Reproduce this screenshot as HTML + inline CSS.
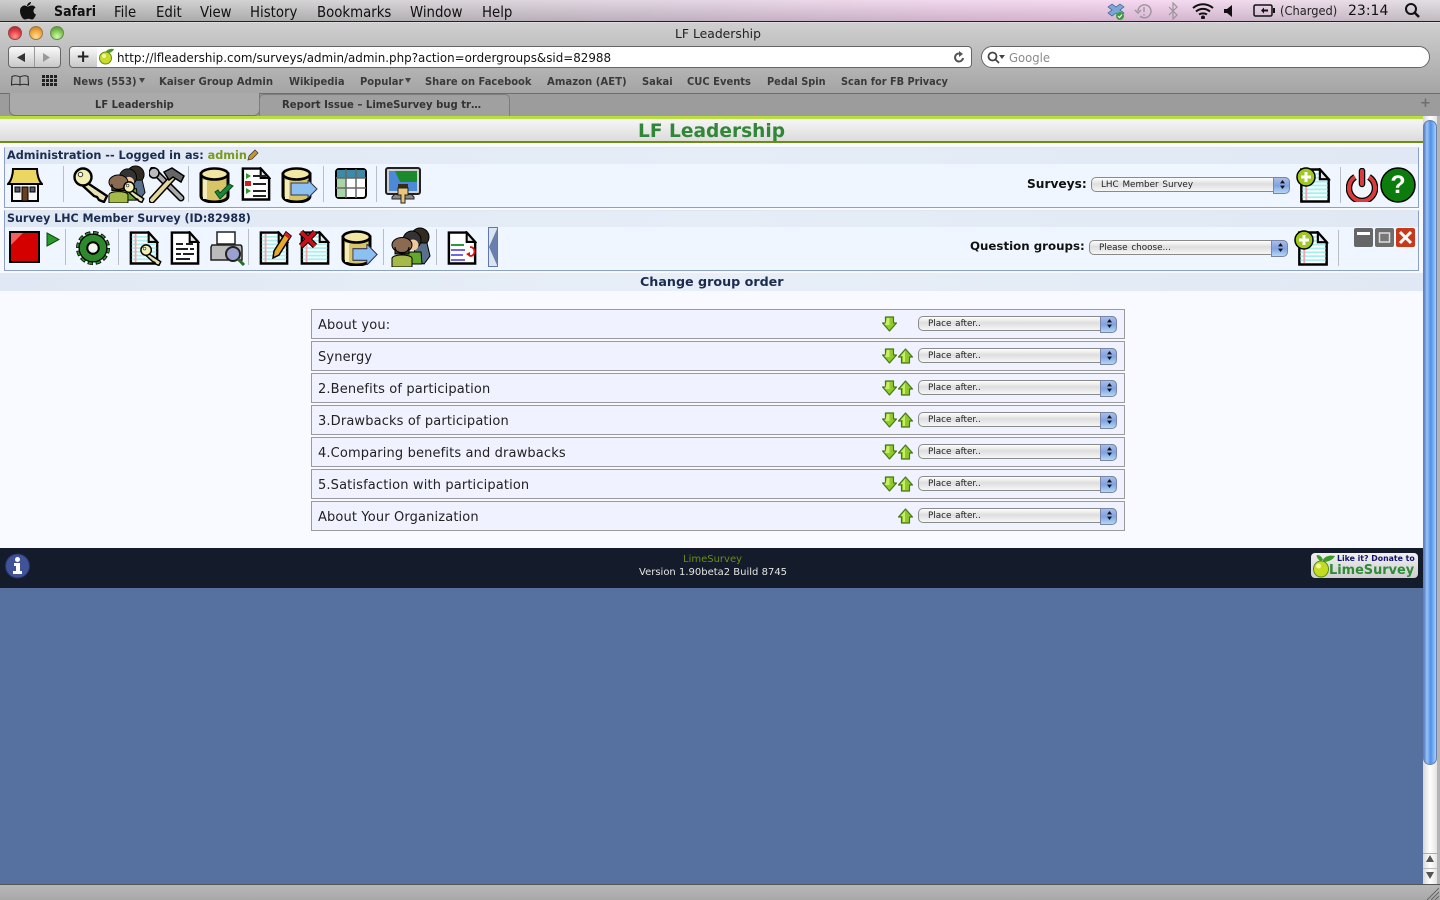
<!DOCTYPE html>
<html lang="en"><head><meta charset="utf-8"><title>LF Leadership</title>
<style>
html,body{margin:0;padding:0;width:1440px;height:900px;overflow:hidden;background:#5670a0}
*{box-sizing:border-box}
.a,.t{position:absolute}
.t{white-space:nowrap;line-height:1}
.mn{font:14.8px "DejaVu Sans Condensed","DejaVu Sans",sans-serif;color:#111;top:3.500px;font-stretch:condensed}
.bm{font:bold 11px "DejaVu Sans",sans-serif;color:#3a3a3a;top:75px;transform-origin:left;transform:scaleX(.905)}
.v{font-family:"DejaVu Sans",sans-serif}
.sel{position:absolute;height:15px;border:1px solid #8a8a8a;border-radius:5px;background:linear-gradient(#fff,#dedede 45%,#f6f6f6);font:8.800px "DejaVu Sans",sans-serif;word-spacing:1px;color:#222;line-height:15px;padding-left:9px}
.sel:after{content:"";position:absolute;right:-1px;top:-1px;width:15px;height:15px;border-radius:0 5px 5px 0;background:linear-gradient(#a9bde8,#7fa2e2 50%,#b4d8f6);border:1px solid #7a86a8}
.sel:before{content:"";position:absolute;z-index:2;right:4px;top:2px;width:5px;height:9px;background:#111;clip-path:polygon(50% 0,100% 38%,0 38%,50% 0,50% 100%,0 62%,100% 62%,50% 100%)}
.row{position:absolute;left:311px;width:814px;height:30px;background:#f0f2ff;border:1px solid #9a9a9a}
.row .l{position:absolute;left:6px;top:9px;font:13px/1 "DejaVu Sans",sans-serif;letter-spacing:.14px;color:#222;white-space:nowrap}
.row .sel{left:606px;top:6px;width:199px}
.row svg{position:absolute;top:6px;width:15px;height:16px}
.div{position:absolute;width:1px;background:#b9bdc4}
.ic{position:absolute}
</style></head><body>
<svg width="0" height="0" style="position:absolute"><defs>
<symbol id="dn" viewBox="0 0 15 16"><path d="M3.500 1h8v6h3L7.500 15 .5 7h3z" fill="#8fcb2a" stroke="#47761a" stroke-width="1.200" stroke-linejoin="round"/><path d="M5 2h2.500v7H3z" fill="#c9ee6a"/></symbol>
<symbol id="up" viewBox="0 0 15 16"><path d="M3.500 15h8V9h3L7.500 1 .5 9h3z" fill="#8fcb2a" stroke="#47761a" stroke-width="1.200" stroke-linejoin="round"/><path d="M7 3 3 8h2v6h2z" fill="#c9ee6a"/></symbol>
<symbol id="doc" viewBox="0 0 32 36"><path d="M2 1.500h19l9 10v23H2z" fill="#fff" stroke="#000" stroke-width="2.600"/><path d="M3 6h17M3 10h26M3 14h26M3 18h26M3 22h26M3 26h26M3 30h26" stroke="#a8f0f0" stroke-width="2"/><path d="M7 3v30" stroke="#f0a8b0" stroke-width="2"/><path d="M21 1.500v10h9z" fill="#e6e6e6" stroke="#000" stroke-width="2.200"/></symbol>
<symbol id="plain" viewBox="0 0 32 36"><path d="M2 1.500h19l9 10v23H2z" fill="#fff" stroke="#000" stroke-width="2.600"/><path d="M21 1.500v10h9z" fill="#e6e6e6" stroke="#000" stroke-width="2.200"/></symbol>
<symbol id="key" viewBox="0 0 36 36"><path d="M13 15 34 29l-3 6-5-2-2-3-3-1-11-10z" fill="#e9e2b5" stroke="#000" stroke-width="2.400" stroke-linejoin="round"/><circle cx="10" cy="10" r="8.500" fill="#f3efb0" stroke="#000" stroke-width="2.400"/><circle cx="7.500" cy="7.500" r="2.200" fill="#fff" stroke="#333"/></symbol>
<symbol id="can" viewBox="0 0 36 36"><path d="M2 7v22c0 8 27 8 27 0V7z" fill="#d8c568" stroke="#000" stroke-width="3"/><ellipse cx="15.500" cy="7" rx="13.500" ry="5.500" fill="#f2e6a5" stroke="#000" stroke-width="2.600"/><path d="M6 13v19" stroke="#f3ecbd" stroke-width="4"/></symbol>
<symbol id="ppl" viewBox="0 0 40 40"><circle cx="29" cy="10" r="9" fill="#322b22" stroke="#000"/><path d="M23 16h13l3 13-6 8-9-4z" fill="#59708a" stroke="#000"/><circle cx="21" cy="13" r="9" fill="#333" stroke="#000"/><circle cx="22" cy="18" r="5.500" fill="#f0c8a0"/><path d="M13 25h17l1 12H15z" fill="#62a82a" stroke="#000"/><ellipse cx="11" cy="18" rx="10" ry="7.500" fill="#8a6a50" stroke="#000"/><path d="M4 20c1 8 13 8 14 0v7H4z" fill="#4a3326" stroke="#000"/><path d="M1 40V31c2-4 18-4 20 0v9z" fill="#a5ba48" stroke="#000"/></symbol>
</defs></svg>

<!-- menu bar -->
<div class="a" style="left:0;top:0;width:1440px;height:22px;background:linear-gradient(90deg,#bdbdbd 0,#c9c7c9 25%,#d8c8d8 45%,#eccbe6 65%,#f3cdec 80%,#d9d4d9 100%);border-bottom:1px solid #222"></div>
<div class="a" style="left:0;top:0;width:1440px;height:21px;background:linear-gradient(rgba(255,255,255,.25),rgba(0,0,0,.12))"></div>
<svg class="a" style="left:20px;top:1px" width="16" height="19" viewBox="0 0 16 19"><path d="M11 1c0 2-2 4-4 4 0-2 2-4 4-4zM8 5.500c1 0 2-1 4-1 1.500 0 3 1 3.500 2-3 2-2.500 6 .5 7-1 2.500-2.500 5-4 5-1.200 0-2-.8-3.500-.8S6 18.500 4.800 18.500C2.800 18.500 0 14 0 10c0-3.500 2.300-5.500 4.500-5.500 1.500 0 2.500 1 3.500 1z" fill="#111"/></svg>
<div class="t mn" style="left:54px;font-weight:bold;font-size:14px">Safari</div>
<div class="t mn" style="left:114px">File</div>
<div class="t mn" style="left:156px">Edit</div>
<div class="t mn" style="left:200px">View</div>
<div class="t mn" style="left:250px">History</div>
<div class="t mn" style="left:317px">Bookmarks</div>
<div class="t mn" style="left:410px">Window</div>
<div class="t mn" style="left:482px">Help</div>
<svg class="a" style="left:1107px;top:2px" width="18" height="18" viewBox="0 0 18 18"><path d="M1 5l4-3 4 3 4-3 4 3-4 3 4 3-4 3-4-3-4 3-4-3 4-3z" fill="#7da6d8" stroke="#35608f" stroke-width=".7"/><circle cx="13" cy="14" r="4" fill="#3b9e3b"/><path d="M11 14l1.500 1.500L15 12.500" stroke="#fff" fill="none"/></svg>
<svg class="a" style="left:1134px;top:2px" width="18" height="18" viewBox="0 0 18 18" fill="none" stroke="#9c939b" stroke-width="1.400"><path d="M4 9a6.500 6.500 0 1 1 2 5"/><path d="M1 8l3 3 3-3" /><path d="M10 5v5M10 12v1.500"/></svg>
<svg class="a" style="left:1167px;top:2px" width="12" height="18" viewBox="0 0 12 18" fill="none" stroke="#9c939b" stroke-width="1.200"><path d="M2 5l8 8-4 4V1l4 4-8 8"/></svg>
<svg class="a" style="left:1192px;top:3px" width="22" height="16" viewBox="0 0 22 16" fill="none" stroke="#111" stroke-width="2"><path d="M1 5c6-5 14-5 20 0M4 8.500c4-3.500 10-3.500 14 0M7 11.500c2-1.500 6-1.500 8 0"/><circle cx="11" cy="14.500" r="1" fill="#111"/></svg>
<svg class="a" style="left:1223px;top:5px" width="10" height="12" viewBox="0 0 10 12"><path d="M1 4h3l5-4v12L4 8H1z" fill="#111"/></svg>
<svg class="a" style="left:1253px;top:4px" width="23" height="13" viewBox="0 0 23 13"><rect x="1" y="1" width="18" height="11" rx="1.500" fill="none" stroke="#111" stroke-width="1.500"/><path d="M20 4h2v5h-2z" fill="#111"/><path d="M5 6.500h3l3-3v2h4v2h-4v2l-3-3" fill="#111"/></svg>
<div class="t v" style="left:1280px;top:5px;font-size:12.500px;color:#222;transform-origin:left;transform:scaleX(.915)">(Charged)</div>
<div class="t v" style="left:1348px;top:4px;font-size:14px;color:#111">23:14</div>
<svg class="a" style="left:1404px;top:2px" width="17" height="17" viewBox="0 0 17 17" fill="none" stroke="#111" stroke-width="2"><circle cx="7" cy="7" r="5"/><path d="M10.500 10.500 15 15" stroke-width="2.500"/></svg>

<!-- window chrome -->
<div class="a" style="left:0;top:22px;width:1440px;height:72px;background:linear-gradient(#cfcfcf,#a4a4a4);border-top:1px solid #ddd"></div>
<div class="a" style="left:8px;top:26px;width:14px;height:14px;border-radius:50%;background:radial-gradient(circle at 50% 80%,#f98 0,#e8404a 50%,#a01820);border:1px solid #8b4a4a"></div>
<div class="a" style="left:29px;top:26px;width:14px;height:14px;border-radius:50%;background:radial-gradient(circle at 50% 80%,#fd9 0,#eda63c 55%,#b87018);border:1px solid #9a7a4a"></div>
<div class="a" style="left:50px;top:26px;width:14px;height:14px;border-radius:50%;background:radial-gradient(circle at 50% 80%,#cfa 0,#80c050 55%,#4a8a28);border:1px solid #6a8a5a"></div>
<div class="t v" style="left:675px;top:27.500px;font-size:12.500px;color:#222;transform-origin:left;transform:scaleX(.99)">LF Leadership</div>
<div class="a" style="left:8px;top:46px;width:53px;height:22px;border:1px solid #666;border-radius:4px;background:linear-gradient(#fafafa,#c8c8c8)"></div>
<div class="a" style="left:34px;top:47px;width:1px;height:20px;background:#999"></div>
<svg class="a" style="left:17px;top:52px" width="40" height="11" viewBox="0 0 40 11"><path d="M0 5.500 8 1v9z" fill="#333"/><path d="M26 1l7 4.500L26 10z" fill="#999"/></svg>
<div class="a" style="left:69px;top:46px;width:29px;height:22px;border:1px solid #666;border-radius:4px 0 0 4px;background:linear-gradient(#fafafa,#c8c8c8)"></div>
<div class="t v" style="left:76px;top:49px;font-size:17px;font-weight:bold;color:#222">+</div>
<div class="a" style="left:97px;top:46px;width:875px;height:22px;border:1px solid #666;border-left:0;border-radius:0 4px 4px 0;background:#fff"></div>
<svg class="a" style="left:98px;top:47px" width="18" height="18" viewBox="0 0 18 18"><path d="M7 6C8 3 12 1 16 2c-1 3-5 5-9 4z" fill="#4a9a2a"/><ellipse cx="7.500" cy="11" rx="6" ry="6" fill="#c8dc28" stroke="#6a8a18"/><circle cx="6" cy="9" r="2" fill="#f2f6a8"/></svg>
<div class="t v" style="left:117px;top:52px;font-size:12.500px;color:#111;transform-origin:left;transform:scaleX(.952)">http://lfleadership.com/surveys/admin/admin.php?action=ordergroups&amp;sid=82988</div>
<svg class="a" style="left:953px;top:51px" width="12" height="13" viewBox="0 0 12 13" fill="none" stroke="#555" stroke-width="2"><path d="M10 7a4 4 0 1 1-2-4"/><path d="M6 0l4 3-4 3z" fill="#555" stroke="none"/></svg>
<div class="a" style="left:981px;top:46px;width:449px;height:22px;border:1px solid #666;border-radius:11px;background:#fff"></div>
<svg class="a" style="left:987px;top:51px" width="18" height="13" viewBox="0 0 18 13" fill="none" stroke="#444" stroke-width="1.800"><circle cx="5.500" cy="5.500" r="4"/><path d="M8.500 8.500 12 12"/><path d="M12 4h6l-3 4z" fill="#444" stroke="none"/></svg>
<div class="t v" style="left:1009px;top:52px;font-size:12.500px;color:#8a8a8a;transform-origin:left;transform:scaleX(.93)">Google</div>
<svg class="a" style="left:11px;top:75px" width="18" height="11" viewBox="0 0 18 11" fill="none" stroke="#222"><path d="M9 2C7 .500 3 .500 1 1.500L.5 10c3-1 6-1 8.500 0 2.500-1 5.500-1 8.500 0L17 1.500C15 .500 11 .500 9 2v8"/></svg>
<svg class="a" style="left:42px;top:75px" width="15" height="11" viewBox="0 0 15 11" fill="#222"><path d="M0 0h3v3H0zM4 0h3v3H4zM8 0h3v3H8zM12 0h3v3h-3zM0 4h3v3H0zM4 4h3v3H4zM8 4h3v3H8zM12 4h3v3h-3zM0 8h3v3H0zM4 8h3v3H4zM8 8h3v3H8zM12 8h3v3h-3z"/></svg>
<div class="t bm" style="left:73px">News (553)</div>
<div class="a" style="left:139px;top:78px;border:3.500px solid transparent;border-top:5px solid #444"></div>
<div class="t bm" style="left:159px;transform:scaleX(.92)">Kaiser Group Admin</div>
<div class="t bm" style="left:289px">Wikipedia</div>
<div class="t bm" style="left:360px">Popular</div>
<div class="a" style="left:405px;top:78px;border:3.500px solid transparent;border-top:5px solid #444"></div>
<div class="t bm" style="left:425px">Share on Facebook</div>
<div class="t bm" style="left:547px;transform:scaleX(.92)">Amazon (AET)</div>
<div class="t bm" style="left:642px">Sakai</div>
<div class="t bm" style="left:687px">CUC Events</div>
<div class="t bm" style="left:767px;transform:scaleX(.89)">Pedal Spin</div>
<div class="t bm" style="left:841px;transform:scaleX(.888)">Scan for FB Privacy</div>
<!-- tabs -->
<div class="a" style="left:0;top:93px;width:1440px;height:23px;background:#9c9c9c;border-top:1px solid #6e6e6e"></div>
<div class="a" style="left:9px;top:93px;width:251px;height:23px;background:#aaa;border:1px solid #777;border-top:0;border-radius:0 0 6px 6px"></div>
<div class="a" style="left:259px;top:94px;width:251px;height:22px;background:#a0a0a0;border:1px solid #7c7c7c;border-bottom:0;border-radius:5px 5px 0 0"></div>
<div class="t bm" style="left:95px;top:98px;color:#333">LF Leadership</div>
<div class="t bm" style="left:282px;top:98px;color:#333;transform:scaleX(.917)">Report Issue – LimeSurvey bug tr…</div>
<div class="t v" style="left:1420px;top:97px;font-size:13px;font-weight:bold;color:#6e6e6e">+</div>

<!-- page -->
<div class="a" style="left:0;top:116px;width:1423px;height:432px;background:#f9faff"></div>
<div class="a" style="left:0;top:116px;width:1423px;height:3px;background:#b9dd3f"></div>
<div class="a" style="left:0;top:119px;width:1423px;height:22px;background:linear-gradient(#f6f6f6,#dcdcdc)"></div>
<div class="a" style="left:0;top:141px;width:1423px;height:2px;background:#6b8e0c"></div>
<div class="t v" style="left:638px;top:122.500px;font-size:18.600px;font-weight:bold;color:#328637">LF Leadership</div>

<div class="a" style="left:4px;top:147px;width:1415px;height:61px;background:#eff6ff;border:1px solid #8aa0c8;border-top-color:#dde6f2"></div>
<div class="a" style="left:5px;top:148px;width:1413px;height:16px;background:linear-gradient(90deg,#dfe8f4,#e6edf7 50%,#dfe8f4)"></div>
<div class="t v" style="left:7px;top:150px;font-size:11.260px;font-weight:bold;color:#1c2c50">Administration -- Logged in as: <span style="color:#7b9a1c">admin</span></div>
<svg class="a" style="left:247px;top:149px" width="12" height="12" viewBox="0 0 12 12"><path d="M1 11l1-4 6-6 3 3-6 6z" fill="#c8962c" stroke="#444" stroke-width=".8"/></svg>

<div class="a" style="left:4px;top:210px;width:1415px;height:61px;background:#eff6ff;border:1px solid #8aa0c8;border-top-color:#dde6f2"></div>
<div class="a" style="left:5px;top:211px;width:1413px;height:16px;background:linear-gradient(90deg,#dfe8f4,#e6edf7 50%,#dfe8f4)"></div>
<div class="t v" style="left:7px;top:213px;font-size:11.090px;font-weight:bold;color:#1c2c50">Survey LHC Member Survey (ID:82988)</div>

<div class="a" style="left:0;top:273px;width:1423px;height:18px;background:linear-gradient(90deg,#dfe8f4,#e8eff8 50%,#dfe8f4)"></div>
<div class="t v" style="left:640px;top:276px;font-size:12.700px;font-weight:bold;color:#1c2c50">Change group order</div>

<!-- dividers -->
<div class="div" style="left:63px;top:166px;height:36px"></div><div class="div" style="left:188px;top:166px;height:36px"></div><div class="div" style="left:323px;top:166px;height:36px"></div><div class="div" style="left:376px;top:166px;height:36px"></div><div class="div" style="left:1340px;top:167px;height:36px"></div>
<div class="div" style="left:65px;top:229px;height:36px"></div><div class="div" style="left:118px;top:229px;height:36px"></div><div class="div" style="left:248px;top:229px;height:36px"></div><div class="div" style="left:383px;top:229px;height:36px"></div><div class="div" style="left:436px;top:229px;height:36px"></div><div class="div" style="left:1338px;top:230px;height:36px"></div>

<!-- admin icons -->
<svg class="ic" style="left:7px;top:167px" width="36" height="36" viewBox="0 0 36 36"><path d="M6 2h24c0 6 2 12 5 15H1c3-3 5-9 5-15z" fill="#ecd662" stroke="#000" stroke-width="2"/><path d="M5 17h26v17H5z" fill="#f4f6f8" stroke="#000" stroke-width="2"/><path d="M15 20h6v14h-6z" fill="#6a4020" stroke="#000"/><path d="M8 20h5v5H8zM23 20h5v5h-5z" fill="#556" stroke="#000"/></svg>
<svg class="ic" style="left:73px;top:167px" width="36" height="36"><use href="#key"/></svg>
<svg class="ic" style="left:108px;top:165px" width="38" height="38"><use href="#ppl"/></svg>
<svg class="ic" style="left:123px;top:181px" width="22" height="22"><use href="#key"/></svg>
<svg class="ic" style="left:149px;top:167px" width="36" height="36" viewBox="0 0 36 36"><path d="M4 3 32 31" stroke="#000" stroke-width="7" stroke-linecap="round"/><path d="M4 3 32 31" stroke="#aaa" stroke-width="4" stroke-linecap="round"/><circle cx="5" cy="6" r="5" fill="#bbb" stroke="#000" stroke-width="1.500"/><path d="M3 33 25 9" stroke="#000" stroke-width="7" stroke-linecap="round"/><path d="M3 33 25 9" stroke="#e3d89a" stroke-width="4" stroke-linecap="round"/><path d="M15 5l8-4 12 8-3 6-8-5-4 3z" fill="#666" stroke="#000" stroke-width="1.500"/></svg>
<svg class="ic" style="left:199px;top:167px" width="36" height="36"><use href="#can"/></svg>
<svg class="ic" style="left:213px;top:182px" width="22" height="20" viewBox="0 0 22 18"><path d="M2 9l5 7L20 3l-4-2-9 9-2-3z" fill="#17883a" stroke="#0c4a20"/></svg>
<svg class="ic" style="left:241px;top:167px" width="30" height="34"><use href="#plain"/></svg>
<svg class="ic" style="left:244px;top:172px" width="24" height="28" viewBox="0 0 24 28"><path d="M2 1l5 3-5 3z" fill="#2a9a2a"/><path d="M1 9h6v5H1z" fill="#c22"/><path d="M2 16l5 3-5 3z" fill="#2a9a2a"/><path d="M9 4h13M9 12h13M9 19h13M9 24h13" stroke="#222" stroke-width="2"/></svg>
<svg class="ic" style="left:281px;top:167px" width="36" height="36"><use href="#can"/></svg>
<svg class="ic" style="left:290px;top:180px" width="28" height="18" viewBox="0 0 28 18"><path d="M1 3h17V0l9 9-9 9v-3H1z" fill="#8cc0f0" stroke="#335"/></svg>
<svg class="ic" style="left:335px;top:168px" width="32" height="31" viewBox="0 0 32 31"><rect x="1" y="1" width="30" height="29" rx="3" fill="#fff" stroke="#000" stroke-width="2"/><path d="M2 2h28v8H2z" fill="#3a8aa8"/><path d="M2 10h9v19H2z" fill="#a8d4a8"/><path d="M11 1v29M21 1v29M1 10h30M1 20h30" stroke="#666" stroke-width="1.500"/></svg>
<svg class="ic" style="left:385px;top:167px" width="36" height="37" viewBox="0 0 36 37"><path d="M10 27h16l3 3v2H7v-2z" fill="#888" stroke="#222"/><rect x="1" y="1" width="34" height="26" rx="2" fill="#d0d0d0" stroke="#222" stroke-width="2"/><rect x="4" y="4" width="28" height="20" fill="#4a8ad8"/><path d="M10 4h22v11H15z" fill="#1b8a2a"/><path d="M13 17h10v4H13z" fill="#3a2a1a"/><path d="M13 21h10v7h-3v8h-4v-8h-3z" fill="#e8c878" stroke="#222"/></svg>
<div class="t v" style="left:1027px;top:178px;font-size:12.200px;font-weight:bold;color:#111">Surveys:</div>
<div class="sel" style="left:1091px;top:177px;width:199px">LHC Member Survey</div>
<svg class="ic" style="left:1299px;top:168px" width="32" height="35"><use href="#doc"/></svg>
<svg class="ic" style="left:1296px;top:167px" width="20" height="20" viewBox="0 0 20 20"><circle cx="10" cy="10" r="9" fill="#a0c820" stroke="#000" stroke-width="1.500"/><path d="M10 5v10M5 10h10" stroke="#fff" stroke-width="3"/></svg>
<svg class="ic" style="left:1346px;top:168px" width="32" height="34" viewBox="0 0 32 34" fill="none"><path d="M9 9a13 13 0 1 0 14 0" stroke="#000" stroke-width="6.500"/><path d="M9 9a13 13 0 1 0 14 0" stroke="#d83c3c" stroke-width="4"/><path d="M16 3v13" stroke="#000" stroke-width="6.500" stroke-linecap="round"/><path d="M16 3v13" stroke="#d83c3c" stroke-width="4" stroke-linecap="round"/></svg>
<svg class="ic" style="left:1380px;top:167px" width="36" height="36" viewBox="0 0 36 36"><circle cx="18" cy="18" r="17" fill="#0c7c0c" stroke="#000" stroke-width="1.500"/><text x="18" y="26" font-family="Liberation Sans" font-size="25" font-weight="bold" fill="#fff" text-anchor="middle">?</text></svg>

<!-- survey icons -->
<svg class="ic" style="left:9px;top:231px" width="31" height="32" viewBox="0 0 31 32"><rect x="1" y="1" width="29" height="30" fill="#d40000" stroke="#000" stroke-width="2"/><path d="M2 2h12L2 14z" fill="#f06060"/></svg>
<svg class="ic" style="left:46px;top:232px" width="14" height="15" viewBox="0 0 14 15"><path d="M1 1l12 6.500L1 14z" fill="#2a9a2a" stroke="#0b4a10"/></svg>
<svg class="ic" style="left:76px;top:231px" width="34" height="34" viewBox="0 0 34 34" fill="none"><circle cx="17" cy="17" r="14.500" stroke="#000" stroke-width="5" stroke-dasharray="5 2.590"/><circle cx="17" cy="17" r="14.500" stroke="#2c8a2c" stroke-width="3.600" stroke-dasharray="3.600 3.990" stroke-dashoffset="-.7"/><circle cx="17" cy="17" r="10" stroke="#000" stroke-width="9"/><circle cx="17" cy="17" r="10" stroke="#2c8a2c" stroke-width="6.500"/><circle cx="17" cy="17" r="5.500" fill="#f4f6f0" stroke="#000" stroke-width="1.500"/></svg>
<svg class="ic" style="left:129px;top:231px" width="30" height="34"><use href="#doc"/></svg>
<svg class="ic" style="left:139px;top:244px" width="24" height="22"><use href="#key"/></svg>
<svg class="ic" style="left:170px;top:231px" width="30" height="34"><use href="#plain"/></svg>
<svg class="ic" style="left:175px;top:242px" width="20" height="20" viewBox="0 0 20 20"><path d="M1 2h7M11 2h7M1 7h12M15 7h4M1 12h5M8 12h11M1 17h14" stroke="#222" stroke-width="2"/></svg>
<svg class="ic" style="left:210px;top:231px" width="36" height="35" viewBox="0 0 36 35"><path d="M7 1h18v12H7z" fill="#fff" stroke="#222" stroke-width="1.500"/><path d="M2 14h28c2 0 2 2 2 4v11H1V16z" fill="#bbb" stroke="#222" stroke-width="1.500"/><circle cx="23" cy="23" r="7" fill="#9aa0d0" stroke="#222" stroke-width="2"/><path d="M28 28l6 6" stroke="#2a6a2a" stroke-width="3"/></svg>
<svg class="ic" style="left:259px;top:231px" width="30" height="34"><use href="#doc"/></svg>
<svg class="ic" style="left:272px;top:231px" width="20" height="28" viewBox="0 0 20 28"><path d="M14 1l5 4L7 24l-6 3 1-7z" fill="#e8a828" stroke="#000" stroke-width="1.500"/><path d="M14 1l5 4-2 3-5-4z" fill="#c22"/></svg>
<svg class="ic" style="left:300px;top:231px" width="30" height="34"><use href="#doc"/></svg>
<svg class="ic" style="left:298px;top:229px" width="20" height="20" viewBox="0 0 20 20"><path d="M3 3l14 14M17 3 3 17" stroke="#000" stroke-width="6"/><path d="M3 3l14 14M17 3 3 17" stroke="#c8101a" stroke-width="4"/></svg>
<svg class="ic" style="left:341px;top:230px" width="36" height="36"><use href="#can"/></svg>
<svg class="ic" style="left:352px;top:244px" width="26" height="21" viewBox="0 0 28 18" preserveAspectRatio="none"><path d="M1 4h15V0l11 9-11 9v-4H1z" fill="#8cc0f0" stroke="#335"/></svg>
<svg class="ic" style="left:391px;top:227px" width="40" height="40"><use href="#ppl"/></svg>
<svg class="ic" style="left:447px;top:231px" width="30" height="34"><use href="#plain"/></svg>
<svg class="ic" style="left:449px;top:244px" width="34" height="20" viewBox="0 0 34 20" fill="none"><path d="M2 1h13" stroke="#2a9a3a" stroke-width="2"/><path d="M2 6h14M2 11h12M2 16h14" stroke="#7068e0" stroke-width="2"/><path d="M18 2c6 0 6 9 0 9" stroke="#e01010" stroke-width="1.800" transform="translate(3 1)"/><path d="M17 10l4-2v5z" fill="#e01010"/></svg>
<svg class="ic" style="left:488px;top:227px" width="10" height="40" viewBox="0 0 10 40"><rect x=".5" y=".5" width="9" height="39" fill="#dbe4f2" stroke="#5f78b0"/><path d="M9 2v36L1 20z" fill="#6a7fae"/></svg>
<div class="t v" style="left:970px;top:241px;font-size:11.800px;font-weight:bold;color:#111">Question groups:</div>
<div class="sel" style="left:1089px;top:240px;width:199px">Please choose...</div>
<svg class="ic" style="left:1297px;top:231px" width="32" height="35"><use href="#doc"/></svg>
<svg class="ic" style="left:1294px;top:230px" width="20" height="20" viewBox="0 0 20 20"><circle cx="10" cy="10" r="9" fill="#a0c820" stroke="#000" stroke-width="1.500"/><path d="M10 5v10M5 10h10" stroke="#fff" stroke-width="3"/></svg>
<svg class="ic" style="left:1354px;top:228px" width="62" height="19" viewBox="0 0 62 19"><rect width="19" height="19" rx="2" fill="#666"/><rect x="3" y="4" width="13" height="3" fill="#fff"/><rect x="21" width="19" height="19" rx="2" fill="#6e6e6e"/><rect x="25.500" y="5" width="10" height="9" fill="#777" stroke="#ddd" stroke-width="1.500"/><rect x="42" width="19" height="19" rx="2" fill="#c8391c"/><path d="M46 4l11 11M57 4 46 15" stroke="#fff" stroke-width="3"/></svg>

<!-- rows -->
<div class="row" style="top:309px"><div class="l">About you:</div><svg style="left:570px"><use href="#dn"/></svg><div class="sel">Place after..</div></div>
<div class="row" style="top:341px"><div class="l">Synergy</div><svg style="left:570px"><use href="#dn"/></svg><svg style="left:586px"><use href="#up"/></svg><div class="sel">Place after..</div></div>
<div class="row" style="top:373px"><div class="l">2.Benefits of participation</div><svg style="left:570px"><use href="#dn"/></svg><svg style="left:586px"><use href="#up"/></svg><div class="sel">Place after..</div></div>
<div class="row" style="top:405px"><div class="l">3.Drawbacks of participation</div><svg style="left:570px"><use href="#dn"/></svg><svg style="left:586px"><use href="#up"/></svg><div class="sel">Place after..</div></div>
<div class="row" style="top:437px"><div class="l">4.Comparing benefits and drawbacks</div><svg style="left:570px"><use href="#dn"/></svg><svg style="left:586px"><use href="#up"/></svg><div class="sel">Place after..</div></div>
<div class="row" style="top:469px"><div class="l">5.Satisfaction with participation</div><svg style="left:570px"><use href="#dn"/></svg><svg style="left:586px"><use href="#up"/></svg><div class="sel">Place after..</div></div>
<div class="row" style="top:501px"><div class="l">About Your Organization</div><svg style="left:586px"><use href="#up"/></svg><div class="sel">Place after..</div></div>

<!-- footer -->
<div class="a" style="left:0;top:548px;width:1423px;height:40px;background:#141c2b"></div>
<div class="a" style="left:0;top:588px;width:1423px;height:296px;background:#5670a0"></div>
<svg class="ic" style="left:5px;top:553px" width="25" height="26" viewBox="0 0 25 26"><circle cx="12.500" cy="13" r="12" fill="#3f5396" stroke="#25346a"/><circle cx="12.500" cy="6.500" r="2.500" fill="#fff"/><path d="M9 10h6v8h2v3H8v-3h3v-5H9z" fill="#fff"/></svg>
<div class="t v" style="left:683px;top:555px;font-size:10px;color:#6a8c14">LimeSurvey</div>
<div class="t v" style="left:639px;top:568px;font-size:10px;color:#e4e4e4">Version 1.90beta2 Build 8745</div>
<div class="a" style="left:1311px;top:553px;width:107px;height:25px;border-radius:4px;background:linear-gradient(#f0f0f0,#cfcfcf)"></div>
<svg class="ic" style="left:1311px;top:552px" width="26" height="26" viewBox="0 0 26 26"><path d="M9 9C6 6 5 4 6 3c3 0 5 2 6 5zM12 8c2-4 7-5 12-4-2 4-7 6-12 6z" fill="#3a9a2a"/><ellipse cx="10" cy="17" rx="7.500" ry="8" fill="#c4dc20" stroke="#5a8a18"/><circle cx="7.500" cy="14" r="2.500" fill="#f3f8a0"/></svg>
<div class="t" style="left:1337px;top:554px;font:bold 7.800px 'DejaVu Sans',sans-serif;color:#13136e">Like it? Donate to</div>
<div class="t" style="left:1329px;top:563px;font:bold 12.900px 'DejaVu Sans',sans-serif;color:#2f8a3a">LimeSurvey</div>

<!-- scrollbar -->
<div class="a" style="left:1423px;top:116px;width:14px;height:768px;background:linear-gradient(90deg,#d8d8d8,#fff 50%,#e4e4e4)"></div>
<div class="a" style="left:1423px;top:120px;width:14px;height:645px;border-radius:7px;background:linear-gradient(90deg,#5a80c8,#9cc4f4 25%,#4c90e8 55%,#a8d0fa 100%);border:1px solid #6a80a8"></div>
<div class="a" style="left:1423px;top:853px;width:14px;height:1px;background:#aaa"></div>
<div class="a" style="left:1423px;top:868px;width:14px;height:1px;background:#bbb"></div>
<div class="a" style="left:1426px;top:855px;border:4px solid transparent;border-bottom:7px solid #555;border-top:0"></div>
<div class="a" style="left:1426px;top:872px;border:4px solid transparent;border-top:7px solid #555;border-bottom:0"></div>
<div class="a" style="left:1437px;top:116px;width:3px;height:768px;background:#b4b4b4"></div>
<!-- status bar -->
<div class="a" style="left:0;top:884px;width:1440px;height:16px;background:linear-gradient(#b8b8b8,#a8a8a8);border-top:1px solid #555"></div>
<svg class="a" style="left:1426px;top:887px" width="13" height="13" viewBox="0 0 13 13" stroke="#666" fill="none"><path d="M1 13 13 1M5 13l8-8M9 13l4-4"/></svg>
</body></html>
